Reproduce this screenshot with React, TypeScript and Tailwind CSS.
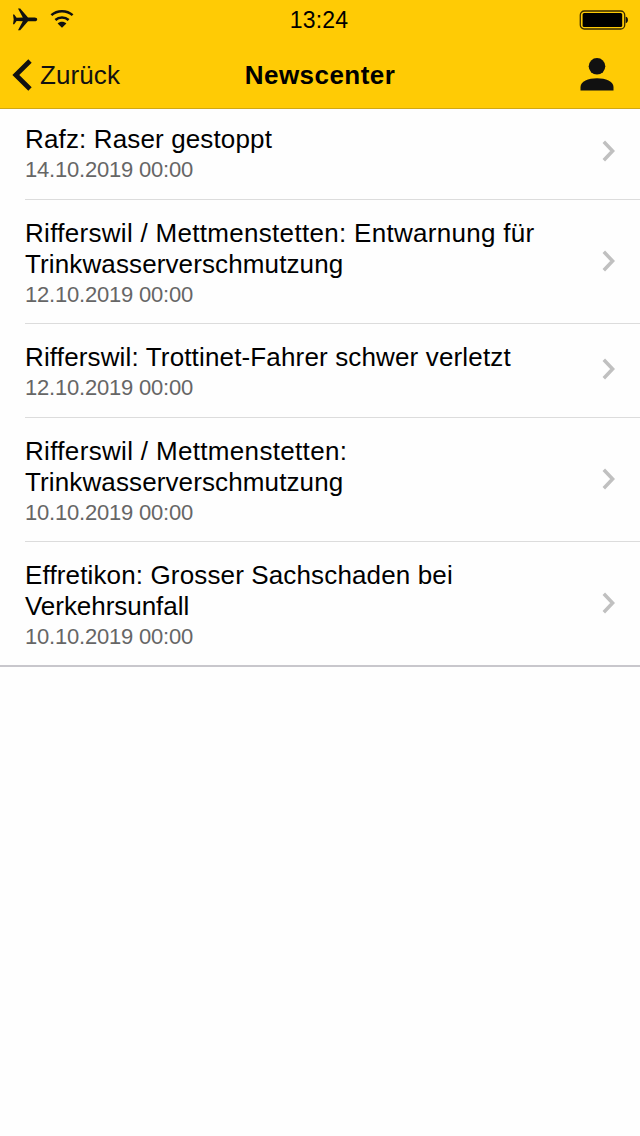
import React from 'react';

type NewsItem = {
  id: number;
  lines: { text: string; tracking: string }[];
  date: string;
};

const newsItems: NewsItem[] = [
  {
    id: 1,
    lines: [{ text: 'Rafz: Raser gestoppt', tracking: 'tracking-[0.14px]' }],
    date: '14.10.2019 00:00',
  },
  {
    id: 2,
    lines: [
      { text: 'Rifferswil / Mettmenstetten: Entwarnung für', tracking: 'tracking-[0.3px]' },
      { text: 'Trinkwasserverschmutzung', tracking: 'tracking-[0.12px]' },
    ],
    date: '12.10.2019 00:00',
  },
  {
    id: 3,
    lines: [{ text: 'Rifferswil: Trottinet-Fahrer schwer verletzt', tracking: 'tracking-[0.15px]' }],
    date: '12.10.2019 00:00',
  },
  {
    id: 4,
    lines: [
      { text: 'Rifferswil / Mettmenstetten:', tracking: 'tracking-[0.33px]' },
      { text: 'Trinkwasserverschmutzung', tracking: 'tracking-[0.12px]' },
    ],
    date: '10.10.2019 00:00',
  },
  {
    id: 5,
    lines: [
      { text: 'Effretikon: Grosser Sachschaden bei', tracking: 'tracking-[0.14px]' },
      { text: 'Verkehrsunfall', tracking: 'tracking-[-0.04px]' },
    ],
    date: '10.10.2019 00:00',
  },
];

const StatusBar = () => (
  <div className="flex h-10 items-center justify-between pr-3 pl-3">
    <div className="flex w-[120px] items-center gap-3">
      <svg className="h-6 w-[26px]" viewBox="0 0 26 24" fill="#111">
        <path d="M1 6.6h1.2l2.4 3.2 6.2-.2L6 .6h2.2l7.8 9h6.6c1.6 0 2.6.8 2.6 1.8s-1 1.8-2.6 1.8H16l-7.8 9H6l4.8-9-6.2-.2-2.4 3.2H1l.7-4.8z" />
      </svg>
      <svg className="h-6 w-6" viewBox="0 0 24 24" fill="none" stroke="#111" strokeWidth="2.5">
        <path d="M1.4 7.2c5.8-5.4 15.4-5.4 21.2 0" />
        <path d="M5.4 12c3.6-3.4 9.6-3.4 13.2 0" />
        <path d="M7.6 15.4c2.4-2.2 6.4-2.2 8.8 0L12 19.8z" fill="#111" stroke="none" />
      </svg>
    </div>
    <span className="mr-[3px] text-center text-[23px] leading-10 tracking-[0.2px]">13:24</span>
    <div className="-mr-px flex w-[120px] justify-end">
      <svg className="h-5 w-[50px]" viewBox="0 0 50 20">
        <rect x="1.3" y="1" width="44.4" height="18" rx="4" fill="none" stroke="#3a2c00" strokeWidth="1.3" />
        <rect x="3.6" y="3" width="39.6" height="14" rx="1.5" fill="#000" />
        <path d="M46.7 6.8c3 .4 3 6 0 6.4z" fill="#111" />
      </svg>
    </div>
  </div>
);

const NavBar = () => (
  <div className="flex h-[68px] items-center justify-between">
    <button className="flex w-[160px] items-center gap-2 pt-0.5 pl-3 text-[26px] leading-[66px] text-[#111]">
      <svg className="h-8 w-5" viewBox="0 0 20 32" fill="none" stroke="#111" strokeWidth="4.8">
        <path d="M18 2 3.8 16 18 30" />
      </svg>
      <span className="tracking-[0.1px]">Zurück</span>
    </button>
    <h1 className="pt-0.5 text-center text-[26px] leading-[66px] font-bold tracking-[0.45px]">Newscenter</h1>
    <div className="flex w-[160px] justify-end pr-[26px]">
      <svg className="h-[34px] w-[34px]" viewBox="0 0 34 34" fill="#111">
        <circle cx="17" cy="9.3" r="8.3" />
        <path d="M.5 33.5v-3.6c0-5.5 7.8-8.6 16.5-8.6s16.5 3.1 16.5 8.6v3.6z" />
      </svg>
    </div>
  </div>
);

const NewsRow = ({ item, first, last }: { item: NewsItem; first: boolean; last: boolean }) => (
  <li className={last ? 'border-b-2 border-[#c8c7cc]' : ''}>
    <a
      className={`ml-[25px] flex items-center justify-between pr-[25px] ${first ? 'pt-[15px]' : 'pt-[18px]'} ${
        item.lines.length > 1 ? 'pb-[14px]' : 'pb-[15px]'
      } ${last ? '' : 'border-b border-[#dcdcdc]'}`}
    >
      <div>
        <h2 className="text-[26px] leading-[31px] text-black">
          {item.lines.map((line) => (
            <span key={line.text} className={`block whitespace-nowrap ${line.tracking}`}>
              {line.text}
            </span>
          ))}
        </h2>
        <p className="text-[22px] leading-[29px] tracking-[-0.2px] text-[#666]">{item.date}</p>
      </div>
      <svg className="mb-1.5 h-6 w-[14px]" viewBox="0 0 14 24" fill="none" stroke="#c0c0c0" strokeWidth="3.5">
        <path d="m2.8 2.8 8.8 9.2-8.8 9.2" />
      </svg>
    </a>
  </li>
);

const App = () => {
  return (
    <div className="min-h-[1136px] w-[640px] bg-[#fefefe] font-['Liberation_Sans',Arial,sans-serif] text-black">
      {/* Header */}
      <header className="border-b border-[#d0a814] bg-[#ffcb05]">
        <StatusBar />
        <NavBar />
      </header>

      {/* News list */}
      <ul>
        {newsItems.map((item, index) => (
          <NewsRow key={item.id} item={item} first={index === 0} last={index === newsItems.length - 1} />
        ))}
      </ul>
    </div>
  );
};

export default App;
